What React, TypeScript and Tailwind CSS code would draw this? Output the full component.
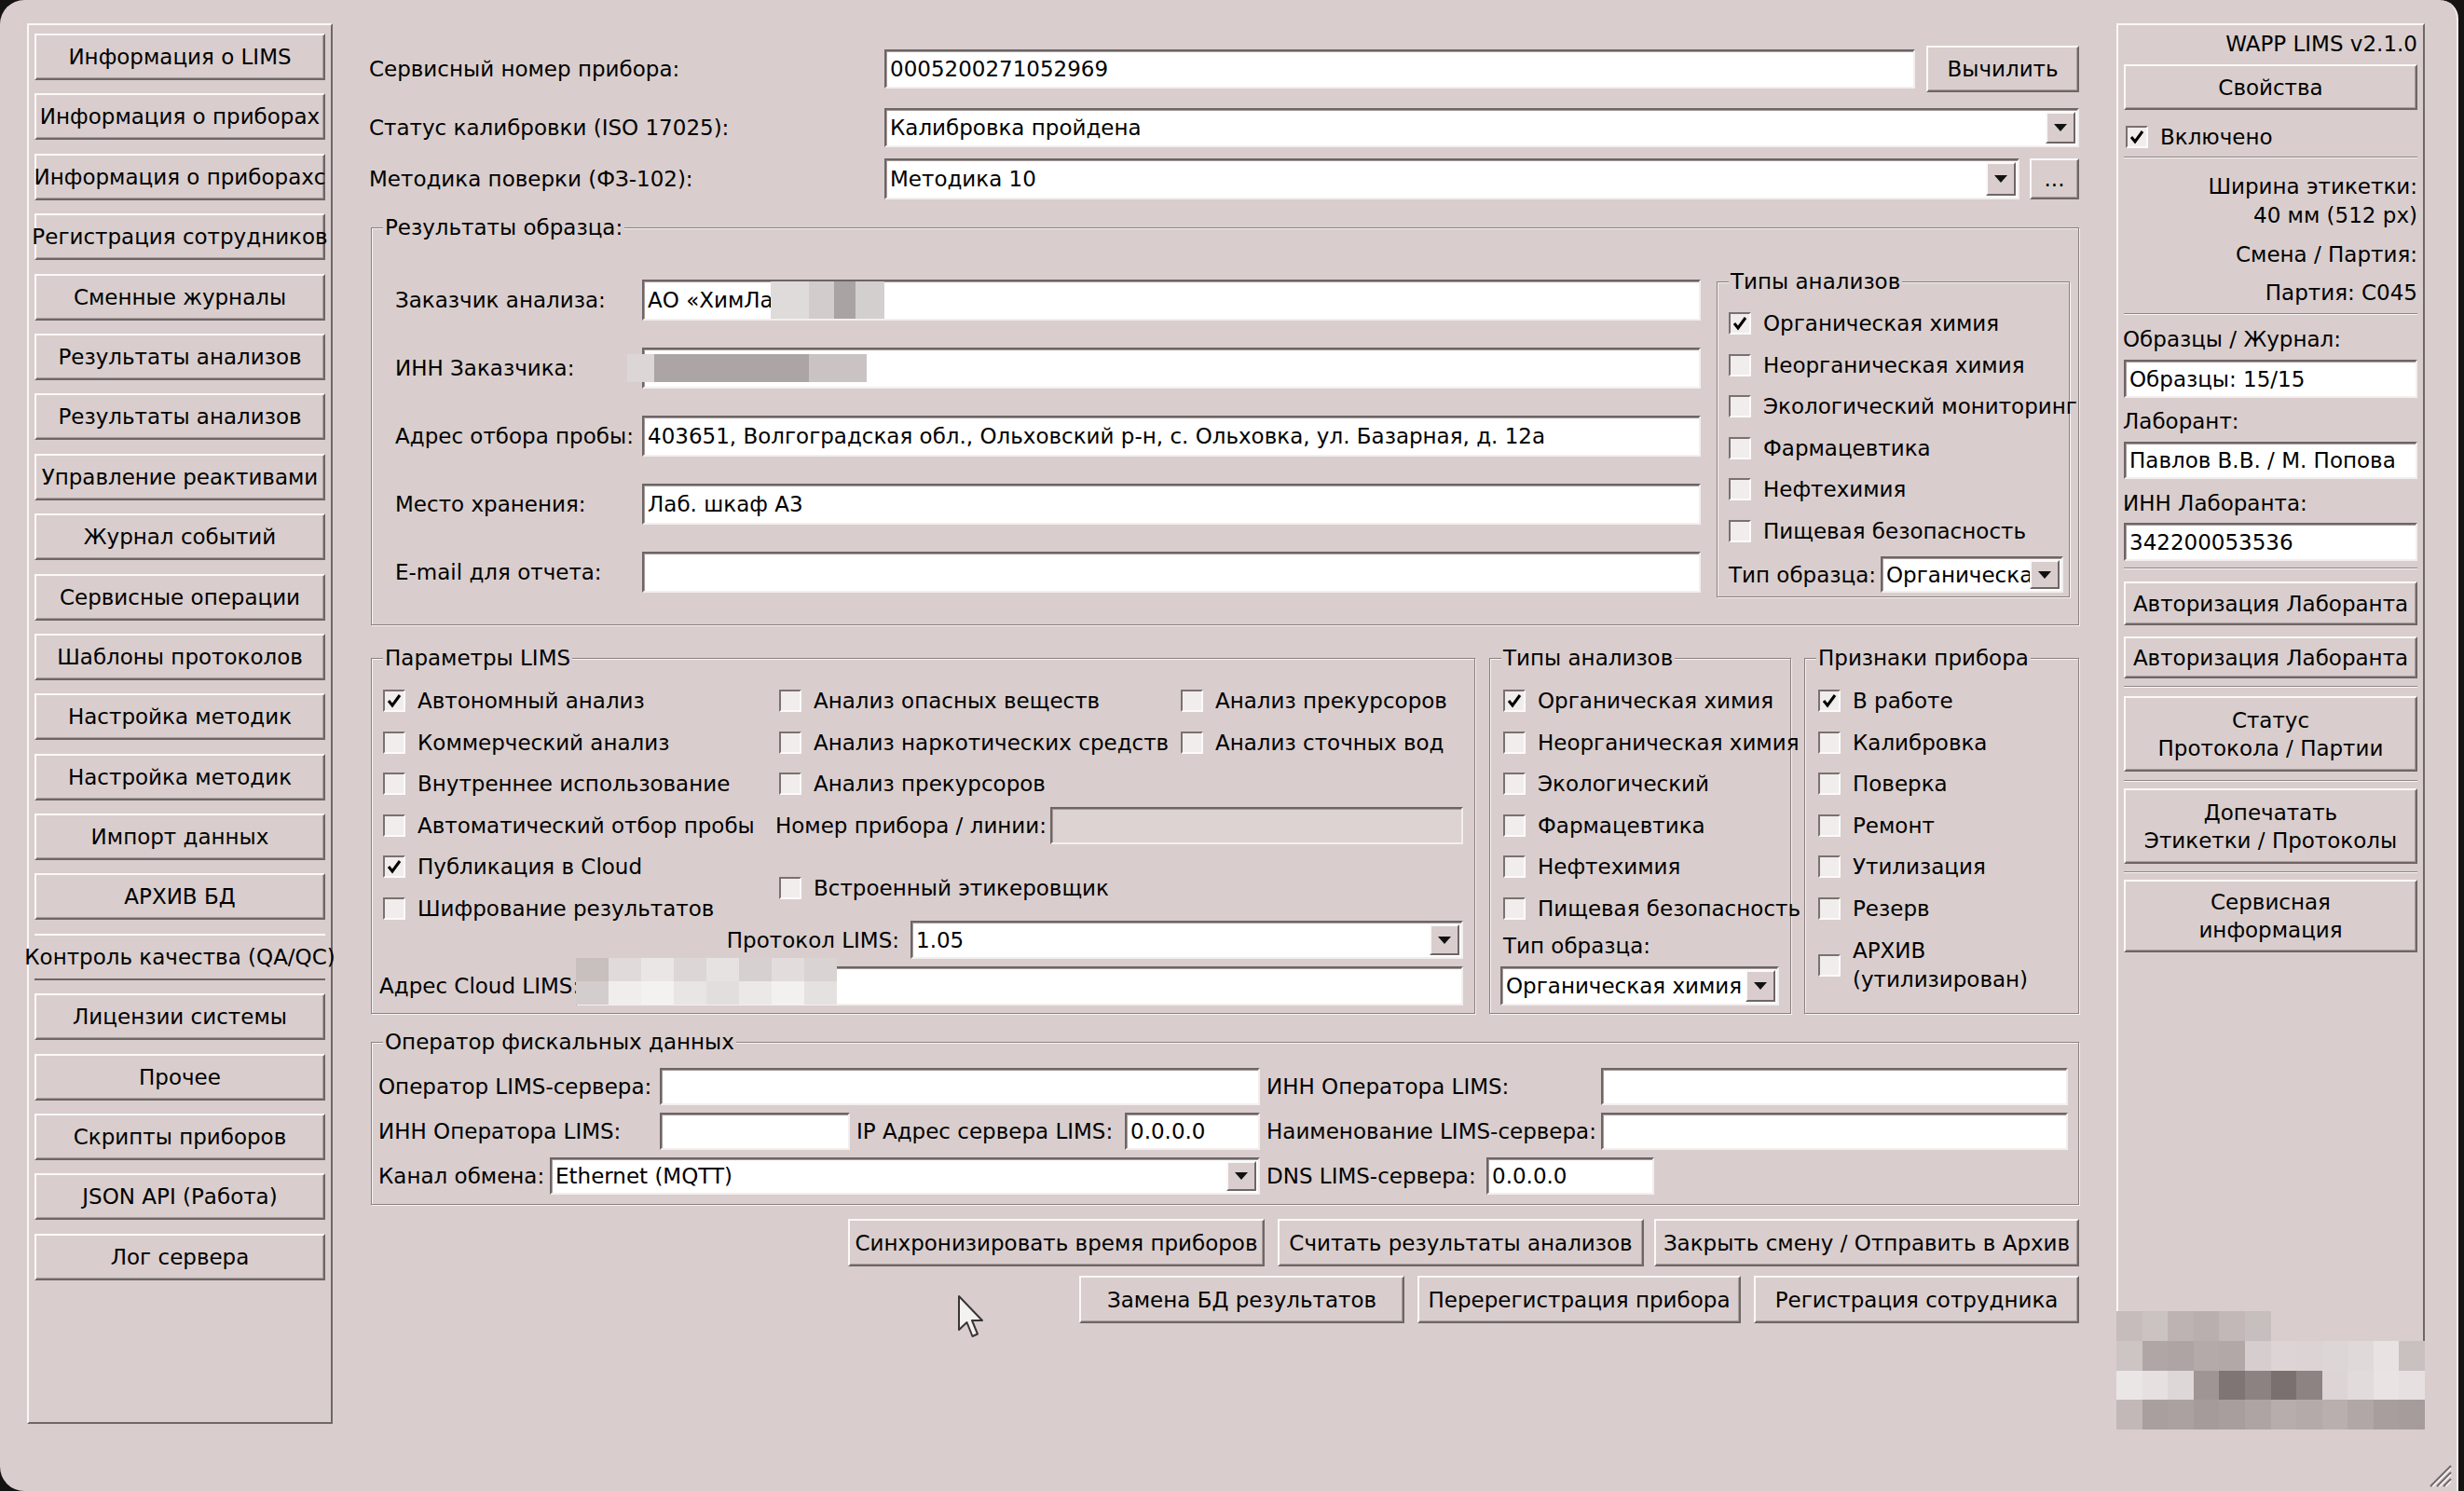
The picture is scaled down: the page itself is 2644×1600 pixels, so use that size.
import React from "react";

type Kids = { children?: React.ReactNode; className?: string };

const navItems = [
  "Информация о LIMS",
  "Информация о приборах",
  "Информация о приборахс",
  "Регистрация сотрудников",
  "Сменные журналы",
  "Результаты анализов",
  "Результаты анализов",
  "Управление реактивами",
  "Журнал событий",
  "Сервисные операции",
  "Шаблоны протоколов",
  "Настройка методик",
  "Настройка методик",
  "Импорт данных",
  "АРХИВ БД",
  "Контроль качества (QA/QC)",
  "Лицензии системы",
  "Прочее",
  "Скрипты приборов",
  "JSON API (Работа)",
  "Лог сервера",
];

// pixelated redaction patches
const customerCells = ["bg-[#e0dbdb]", "bg-[#d2cccc]", "bg-[#aaa3a3]", "bg-[#d4cfcf]"];
const innCells = ["bg-[#dcd6d6]", "bg-[#aca5a5]", "bg-[#c9c3c3]"];
const cloudCells = [
  "bg-[#c8bfbf]", "bg-[#e0dada]", "bg-[#ebe6e6]", "bg-[#dcd6d6]", "bg-[#e7e2e2]", "bg-[#d6d0d0]", "bg-[#e2dcdc]", "bg-[#d9d3d3]",
  "bg-[#d4cdcd]", "bg-[#f1eded]", "bg-[#f4f1f1]", "bg-[#eae5e5]", "bg-[#e3dede]", "bg-[#ece8e8]", "bg-[#f3f0f0]", "bg-[#e6e1e1]",
];
const panelCells = [
  "bg-[#c6bcbc]", "bg-[#cbc2c2]", "bg-[#bdb3b3]", "bg-[#b9afaf]", "bg-[#c2b8b8]", "bg-[#c7bebe]", "bg-transparent", "bg-transparent", "bg-transparent", "bg-transparent", "bg-transparent", "bg-transparent",
  "bg-[#cdc4c4]", "bg-[#b0a6a6]", "bg-[#aea4a4]", "bg-[#b4aaaa]", "bg-[#b2a8a8]", "bg-[#d6cece]", "bg-[#ddd5d5]", "bg-[#dcd4d4]", "bg-[#ddd6d6]", "bg-[#e0d9d9]", "bg-[#e8e2e2]", "bg-[#c9c0c0]",
  "bg-[#ebe6e6]", "bg-[#e6e0e0]", "bg-[#ded7d7]", "bg-[#9f9595]", "bg-[#7f7575]", "bg-[#8c8282]", "bg-[#7a7070]", "bg-[#8d8383]", "bg-[#ddd5d5]", "bg-[#e2dbdb]", "bg-[#e9e3e3]", "bg-[#e6e0e0]",
  "bg-[#c2b8b8]", "bg-[#a99f9f]", "bg-[#aba1a1]", "bg-[#a59b9b]", "bg-[#a89e9e]", "bg-[#aea4a4]", "bg-[#b7adad]", "bg-[#b4aaaa]", "bg-[#b9afaf]", "bg-[#b1a7a7]", "bg-[#a89e9e]", "bg-[#a69c9c]",
];

function Btn({ children, className = "" }: Kids) {
  return (
    <div
      className={`flex items-center justify-center text-center whitespace-nowrap leading-[30px] bg-[#d9cecd] border-2 border-t-[#fbf8f8] border-l-[#fbf8f8] border-r-[#6f6666] border-b-[#6f6666] shadow-[inset_-1px_-1px_0_#a89e9e] ${className}`}
    >
      {children}
    </div>
  );
}

function Field({ children, className = "" }: Kids) {
  return (
    <div
      className={`relative flex items-center px-[4px] whitespace-nowrap overflow-hidden bg-white border-2 border-t-[#6d6565] border-l-[#6d6565] border-b-[#f3efef] border-r-[#f3efef] shadow-[inset_1px_1px_0_#a49a9a] ${className}`}
    >
      {children}
    </div>
  );
}

function DropArrow() {
  return (
    <div className="w-[32px] self-stretch my-[2px] shrink-0 flex items-center justify-center bg-[#d9cecd] border-2 border-t-[#fbf8f8] border-l-[#fbf8f8] border-r-[#6f6666] border-b-[#6f6666]">
      <svg width="14" height="8" viewBox="0 0 14 8">
        <path d="M0 0H14L7 8Z" fill="#111" />
      </svg>
    </div>
  );
}

function Select({ value, className = "" }: { value: string; className?: string }) {
  return (
    <div
      className={`flex items-stretch pl-[4px] pr-[2px] whitespace-nowrap overflow-hidden bg-white border-2 border-t-[#6d6565] border-l-[#6d6565] border-b-[#f3efef] border-r-[#f3efef] shadow-[inset_1px_1px_0_#a49a9a] ${className}`}
    >
      <span className="flex-1 flex items-center overflow-hidden">{value}</span>
      <DropArrow />
    </div>
  );
}

function Box({ checked }: { checked?: boolean }) {
  return (
    <span className="w-[24px] h-[24px] shrink-0 flex items-center justify-center bg-[#f1eded] border-2 border-t-[#7a7171] border-l-[#7a7171] border-b-[#fcfafa] border-r-[#fcfafa]">
      {checked && (
        <svg width="18" height="18" viewBox="0 0 18 18">
          <path d="M3 9L7 14L15 3" fill="none" stroke="#000" strokeWidth="3" />
        </svg>
      )}
    </span>
  );
}

function Check({ label, checked, className = "" }: { label: string; checked?: boolean; className?: string }) {
  return (
    <div className={`flex items-center gap-[13px] h-[44.5px] whitespace-nowrap ${className}`}>
      <Box checked={checked} />
      <span>{label}</span>
    </div>
  );
}

function Group({ title, className = "", children }: Kids & { title: string }) {
  return (
    <fieldset
      className={`min-w-0 shrink-0 border border-[#8a8080] shadow-[inset_1px_1px_0_#f8f4f4,1px_1px_0_#f8f4f4] ${className}`}
    >
      <legend className="ml-[12px] px-[2px] leading-[28px] bg-[#d9cecd] whitespace-nowrap">{title}</legend>
      {children}
    </fieldset>
  );
}

function Sep({ className = "" }: Kids) {
  return <div className={`h-[2px] border-t border-t-[#8f8686] border-b border-b-[#faf7f7] ${className}`} />;
}

function LeftPanel() {
  return (
    <div className="w-[328px] h-[1503px] shrink-0 flex flex-col gap-[14.4px] pt-[9px] px-[6px] border-2 border-t-[#faf7f7] border-l-[#faf7f7] border-r-[#6f6767] border-b-[#6f6767]">
      {navItems.map((item, i) =>
        item.startsWith("Контроль") ? (
          <div
            key={i}
            className="h-[50px] shrink-0 flex items-center justify-center whitespace-nowrap border-t-2 border-t-[#fbf8f8] border-b-2 border-b-[#6f6666]"
          >
            {item}
          </div>
        ) : (
          <Btn key={i} className="h-[50px] shrink-0">
            {item}
          </Btn>
        )
      )}
    </div>
  );
}

function SampleGroup() {
  const rows = [
    { label: "Заказчик анализа:", value: "АО «ХимЛаб" },
    { label: "ИНН Заказчика:", value: "" },
    { label: "Адрес отбора пробы:", value: "403651, Волгоградская обл., Ольховский р-н, с. Ольховка, ул. Базарная, д. 12а" },
    { label: "Место хранения:", value: "Лаб. шкаф А3" },
    { label: "E-mail для отчета:", value: "" },
  ];
  return (
    <Group title="Результаты образца:" className="mt-[16px] ml-[2px] w-[1833px] h-[441px]">
      <div className="flex pl-[25px] pr-[9px]">
        <div className="flex-1 min-w-0 flex flex-col pt-[42px] gap-[29px]">
          {rows.map((r, i) => (
            <div key={i} className="relative flex items-center h-[44px]">
              <span className="w-[265px] shrink-0 whitespace-nowrap">{r.label}</span>
              <Field className="flex-1 h-[44px]">
                {r.value}
                {i === 0 && (
                  <div className="absolute left-[136px] top-0 h-full w-[122px] grid grid-cols-[41px_27px_23px_31px]">
                    {customerCells.map((c, k) => (
                      <div key={k} className={c} />
                    ))}
                  </div>
                )}
              </Field>
              {i === 1 && (
                <div className="absolute left-[249px] top-[7px] h-[30px] w-[257px] grid grid-cols-[29px_166px_62px]">
                  {innCells.map((c, k) => (
                    <div key={k} className={c} />
                  ))}
                </div>
              )}
            </div>
          ))}
        </div>
        <Group title="Типы анализов" className="ml-[17px] mt-[30px] w-[379px] h-[353px]">
          <div className="pt-[9px] pl-[12px] pr-[6px] flex flex-col">
            <Check label="Органическая химия" checked />
            <Check label="Неорганическая химия" />
            <Check label="Экологический мониторинг" />
            <Check label="Фармацевтика" />
            <Check label="Нефтехимия" />
            <Check label="Пищевая безопасность" />
            <div className="mt-[5px] flex items-center justify-between h-[39px]">
              <span className="whitespace-nowrap">Тип образца:</span>
              <Select value="Органическа" className="w-[196px] h-[39px]" />
            </div>
          </div>
        </Group>
      </div>
    </Group>
  );
}

function LimsGroup() {
  return (
    <Group title="Параметры LIMS" className="ml-[2px] w-[1185px] h-[396px]">
      <div className="pt-[10px] pl-[12px] pr-[12px] flex flex-col">
        <div className="flex">
          <div className="w-[425px] shrink-0 flex flex-col">
            <Check label="Автономный анализ" checked />
            <Check label="Коммерческий анализ" />
            <Check label="Внутреннее использование" />
            <Check label="Автоматический отбор пробы" />
            <Check label="Публикация в Cloud" checked />
            <Check label="Шифрование результатов" />
          </div>
          <div className="flex-1 flex flex-col">
            <div className="grid grid-cols-[431px_1fr]">
              <Check label="Анализ опасных веществ" />
              <Check label="Анализ прекурсоров" />
              <Check label="Анализ наркотических средств" />
              <Check label="Анализ сточных вод" />
              <Check label="Анализ прекурсоров" />
            </div>
            <div className="flex items-center h-[44.5px] -ml-[4px]">
              <span className="w-[295px] shrink-0 whitespace-nowrap">Номер прибора / линии:</span>
              <Field className="flex-1 h-[40px] !bg-[#ddd3d2]" />
            </div>
            <div className="h-[89px] flex items-center">
              <Check label="Встроенный этикеровщик" />
            </div>
          </div>
        </div>
        <div className="-mt-[9px] flex items-center justify-end h-[41px]">
          <span className="whitespace-nowrap">Протокол LIMS:</span>
          <Select value="1.05" className="ml-[12px] w-[593px] h-[41px]" />
        </div>
        <div className="relative mt-[8px] flex items-center h-[42px] -ml-[4px]">
          <span className="w-[211px] shrink-0 whitespace-nowrap">Адрес Cloud LIMS:</span>
          <Field className="flex-1 h-[42px]" />
          <div className="absolute left-[211px] top-[-9px] w-[280px] h-[50px] grid grid-cols-8 grid-rows-2">
            {cloudCells.map((c, k) => (
              <div key={k} className={c} />
            ))}
          </div>
        </div>
      </div>
    </Group>
  );
}

function TypesGroup() {
  return (
    <Group title="Типы анализов" className="ml-[15px] w-[324px] h-[396px]">
      <div className="pt-[10px] pl-[14px] flex flex-col">
        <Check label="Органическая химия" checked />
        <Check label="Неорганическая химия" />
        <Check label="Экологический" />
        <Check label="Фармацевтика" />
        <Check label="Нефтехимия" />
        <Check label="Пищевая безопасность" />
        <div className="mt-[3px] h-[30px] flex items-center whitespace-nowrap">Тип образца:</div>
        <Select value="Органическая химия" className="mt-[7px] -ml-[3px] w-[299px] h-[42px]" />
      </div>
    </Group>
  );
}

function FlagsGroup() {
  return (
    <Group title="Признаки прибора" className="ml-[14px] w-[295px] h-[396px]">
      <div className="pt-[10px] pl-[14px] flex flex-col">
        <Check label="В работе" checked />
        <Check label="Калибровка" />
        <Check label="Поверка" />
        <Check label="Ремонт" />
        <Check label="Утилизация" />
        <Check label="Резерв" />
        <div className="mt-[8px] flex items-center gap-[13px]">
          <Box />
          <span className="leading-[31px] whitespace-nowrap">
            АРХИВ
            <br />
            (утилизирован)
          </span>
        </div>
      </div>
    </Group>
  );
}

function FiscalGroup() {
  return (
    <Group title="Оператор фискальных данных" className="mt-[16px] ml-[2px] w-[1833px] h-[189px]">
      <div className="pt-[14px] pl-[7px] pr-[11px] flex flex-col gap-[8px] whitespace-nowrap">
        <div className="flex h-[40px] items-center">
          <div className="w-[946px] flex items-center">
            <span className="w-[302px] shrink-0">Оператор LIMS-сервера:</span>
            <Field className="flex-1 h-[40px]" />
          </div>
          <div className="ml-[7px] flex-1 flex items-center">
            <span className="w-[359px] shrink-0">ИНН Оператора LIMS:</span>
            <Field className="flex-1 h-[40px]" />
          </div>
        </div>
        <div className="flex h-[40px] items-center">
          <div className="w-[946px] flex items-center">
            <span className="w-[302px] shrink-0">ИНН Оператора LIMS:</span>
            <Field className="w-[204px] h-[40px]" />
            <span className="ml-[7px] w-[288px] shrink-0">IP Адрес сервера LIMS:</span>
            <Field className="flex-1 h-[40px]">0.0.0.0</Field>
          </div>
          <div className="ml-[7px] flex-1 flex items-center">
            <span className="w-[359px] shrink-0">Наименование LIMS-сервера:</span>
            <Field className="flex-1 h-[40px]" />
          </div>
        </div>
        <div className="flex h-[40px] items-center">
          <div className="w-[946px] flex items-center">
            <span className="w-[184px] shrink-0">Канал обмена:</span>
            <Select value="Ethernet (MQTT)" className="flex-1 h-[40px]" />
          </div>
          <div className="ml-[7px] flex-1 flex items-center">
            <span className="w-[236px] shrink-0">DNS LIMS-сервера:</span>
            <Field className="w-[180px] h-[40px]">0.0.0.0</Field>
          </div>
        </div>
      </div>
    </Group>
  );
}

function MainArea() {
  return (
    <div className="ml-[39px] w-[1835px] shrink-0 flex flex-col pt-[24px]">
      <div className="flex items-center h-[50px]">
        <span className="w-[553px] shrink-0 whitespace-nowrap">Сервисный номер прибора:</span>
        <Field className="flex-1 h-[42px]">0005200271052969</Field>
        <Btn className="ml-[12px] w-[164px] h-[50px]">Вычилить</Btn>
      </div>
      <div className="mt-[17px] flex items-center">
        <span className="w-[553px] shrink-0 whitespace-nowrap">Статус калибровки (ISO 17025):</span>
        <Select value="Калибровка пройдена" className="flex-1 h-[42px]" />
      </div>
      <div className="mt-[12px] flex items-center">
        <span className="w-[553px] shrink-0 whitespace-nowrap">Методика поверки (ФЗ-102):</span>
        <Select value="Методика 10" className="flex-1 h-[44px]" />
        <Btn className="ml-[11px] w-[53px] h-[44px]">...</Btn>
      </div>
      <SampleGroup />
      <div className="mt-[21px] flex">
        <LimsGroup />
        <TypesGroup />
        <FlagsGroup />
      </div>
      <FiscalGroup />
      <div className="mt-[15px] flex justify-end">
        <Btn className="w-[447px] h-[51px]">Синхронизировать время приборов</Btn>
        <Btn className="ml-[14px] w-[393px] h-[51px]">Считать результаты анализов</Btn>
        <Btn className="ml-[11px] w-[456px] h-[51px]">Закрыть смену / Отправить в Архив</Btn>
      </div>
      <div className="mt-[10px] flex justify-end">
        <Btn className="w-[349px] h-[51px]">Замена БД результатов</Btn>
        <Btn className="ml-[14px] w-[347px] h-[51px]">Перерегистрация прибора</Btn>
        <Btn className="ml-[14px] w-[349px] h-[51px]">Регистрация сотрудника</Btn>
      </div>
    </div>
  );
}

function RightPanel() {
  return (
    <div className="relative ml-[40px] w-[331px] h-[1506px] shrink-0 flex flex-col px-[6px] whitespace-nowrap border-2 border-t-[#faf7f7] border-l-[#faf7f7] border-r-[#6f6767] border-b-[#6f6767]">
      <div className="mt-[6px] text-right">WAPP LIMS v2.1.0</div>
      <Btn className="mt-[8px] h-[49px]">Свойства</Btn>
      <div className="mt-[14px] h-[30px] flex items-center gap-[13px] pl-[2px]">
        <Box checked />
        <span>Включено</span>
      </div>
      <Sep className="mt-[6px]" />
      <div className="mt-[15px] text-right leading-[31px]">
        Ширина этикетки:
        <br />
        40 мм (512 px)
      </div>
      <div className="mt-[12px] text-right">Смена / Партия:</div>
      <div className="mt-[13px] text-right">Партия: C045</div>
      <Sep className="mt-[8px]" />
      <div className="mt-[12px] -ml-[1px]">Образцы / Журнал:</div>
      <Field className="mt-[8px] h-[41px]">Образцы: 15/15</Field>
      <div className="mt-[11px] -ml-[1px]">Лаборант:</div>
      <Field className="mt-[8px] h-[40px]">Павлов В.В. / М. Попова</Field>
      <div className="mt-[12px] -ml-[1px]">ИНН Лаборанта:</div>
      <Field className="mt-[7px] h-[41px]">342200053536</Field>
      <Sep className="mt-[7px]" />
      <Btn className="mt-[13px] h-[47px]">Авторизация Лаборанта</Btn>
      <Btn className="mt-[12px] h-[45px]">Авторизация Лаборанта</Btn>
      <Sep className="mt-[8px]" />
      <Btn className="mt-[9px] h-[81px]">
        Статус
        <br />
        Протокола / Партии
      </Btn>
      <Sep className="mt-[9px]" />
      <Btn className="mt-[7px] h-[81px]">
        Допечатать
        <br />
        Этикетки / Протоколы
      </Btn>
      <Sep className="mt-[8px]" />
      <Btn className="mt-[7px] h-[78px]">
        Сервисная
        <br />
        информация
      </Btn>
      <div className="absolute left-[-2px] bottom-[-5px] w-[331px] h-[127px] grid grid-cols-12 grid-rows-4">
        {panelCells.map((c, k) => (
          <div key={k} className={c} />
        ))}
      </div>
    </div>
  );
}

function Pointer() {
  return (
    <svg className="absolute left-[1027px] top-[1389px]" width="30" height="50" viewBox="0 0 30 50">
      <path
        d="M2 2L2 38L10.5 30L16.5 45L22 42.5L16 28L27 28Z"
        fill="#f4f1f1"
        stroke="#3a3434"
        strokeWidth="2"
        strokeLinejoin="round"
      />
    </svg>
  );
}

function SizeGrip() {
  return (
    <svg className="absolute right-[4px] bottom-[3px]" width="30" height="30" viewBox="0 0 30 30">
      <g stroke="#6f6666" strokeWidth="2">
        <path d="M28 6L6 28" />
        <path d="M28 13L13 28" />
        <path d="M28 20L20 28" />
      </g>
      <g stroke="#faf7f7" strokeWidth="1.5">
        <path d="M28 8.5L8.5 28" />
        <path d="M28 15.5L15.5 28" />
        <path d="M28 22.5L22.5 28" />
      </g>
    </svg>
  );
}

export default function App() {
  return (
    <div className="w-[2644px] h-[1600px] bg-[#151212] font-['DejaVu_Sans',sans-serif] text-[23px] leading-[28px] text-black overflow-hidden">
      <div className="relative w-[2638px] h-[1600px] flex pl-[29px] pt-[25px] bg-[#d9cecd] rounded-tl-[26px] rounded-tr-[20px] rounded-bl-[26px] border-r-2 border-r-[#f2eded]">
        <LeftPanel />
        <MainArea />
        <RightPanel />
        <Pointer />
        <SizeGrip />
      </div>
    </div>
  );
}
